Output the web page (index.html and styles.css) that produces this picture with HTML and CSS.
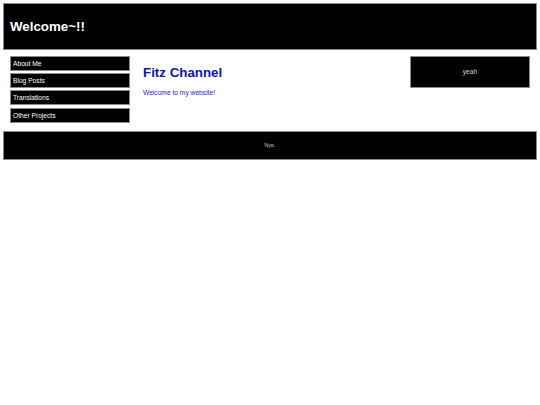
FILE: index.html
```html
<!DOCTYPE html>
<html lang="en">
<head>
<meta charset="utf-8">
<title>Fitz Channel</title>
<link rel="stylesheet" href="styles.css">
</head>
<body>
<header class="site-header">
  <h1 class="site-title">Welcome~!!</h1>
</header>
<div class="layout">
  <nav class="side-nav">
    <a class="nav-item" href="#">About Me</a>
    <a class="nav-item" href="#">Blog Posts</a>
    <a class="nav-item" href="#">Translations</a>
    <a class="nav-item" href="#">Other Projects</a>
  </nav>
  <main class="content">
    <h2 class="content-title">Fitz Channel</h2>
    <p class="content-text">Welcome to my website!</p>
  </main>
  <aside class="side-box">yeah</aside>
</div>
<footer class="site-footer">Nyo.</footer>
</body>
</html>
```
FILE: styles.css
```css
html, body {
  background: #ffffff;
}
body {
  margin: 3px;
  font-family: "Liberation Sans", Arial, sans-serif;
}
.site-header {
  background: #000;
  border: 1px solid #8a8a8a;
  height: 45px;
  padding-left: 6px;
  display: flex;
  align-items: center;
}
.site-title {
  margin: 0;
  color: #fff;
  font-size: 13.33px;
  font-weight: bold;
}
.layout {
  display: flex;
  align-items: flex-start;
  padding: 6px 7px 8.4px 7px;
}
.side-nav {
  width: 120px;
  display: flex;
  flex-direction: column;
  gap: 2.2px;
}
.nav-item {
  box-sizing: border-box;
  height: 15px;
  background: #000;
  border: 1px solid #8a8a8a;
  color: #fff;
  text-decoration: none;
  font-size: 6.67px;
  line-height: 13px;
  padding-left: 2px;
}
.content {
  flex: 1;
  margin-left: 13px;
}
.content-title {
  margin: 8.5px 0 0 0;
  font-size: 13.33px;
  font-weight: bold;
  color: #1212b0;
}
.content-text {
  margin: 9.5px 0 0 0;
  font-size: 6.67px;
  color: #2525cc;
}
.side-box {
  box-sizing: border-box;
  width: 120px;
  height: 31.6px;
  background: #000;
  border: 1px solid #8a8a8a;
  color: #cfcfcf;
  font-size: 6.67px;
  display: flex;
  align-items: center;
  justify-content: center;
}
.site-footer {
  box-sizing: border-box;
  height: 29px;
  background: #000;
  border: 1px solid #8a8a8a;
  color: #d0d0d0;
  font-size: 5.33px;
  display: flex;
  align-items: center;
  justify-content: center;
}
```
